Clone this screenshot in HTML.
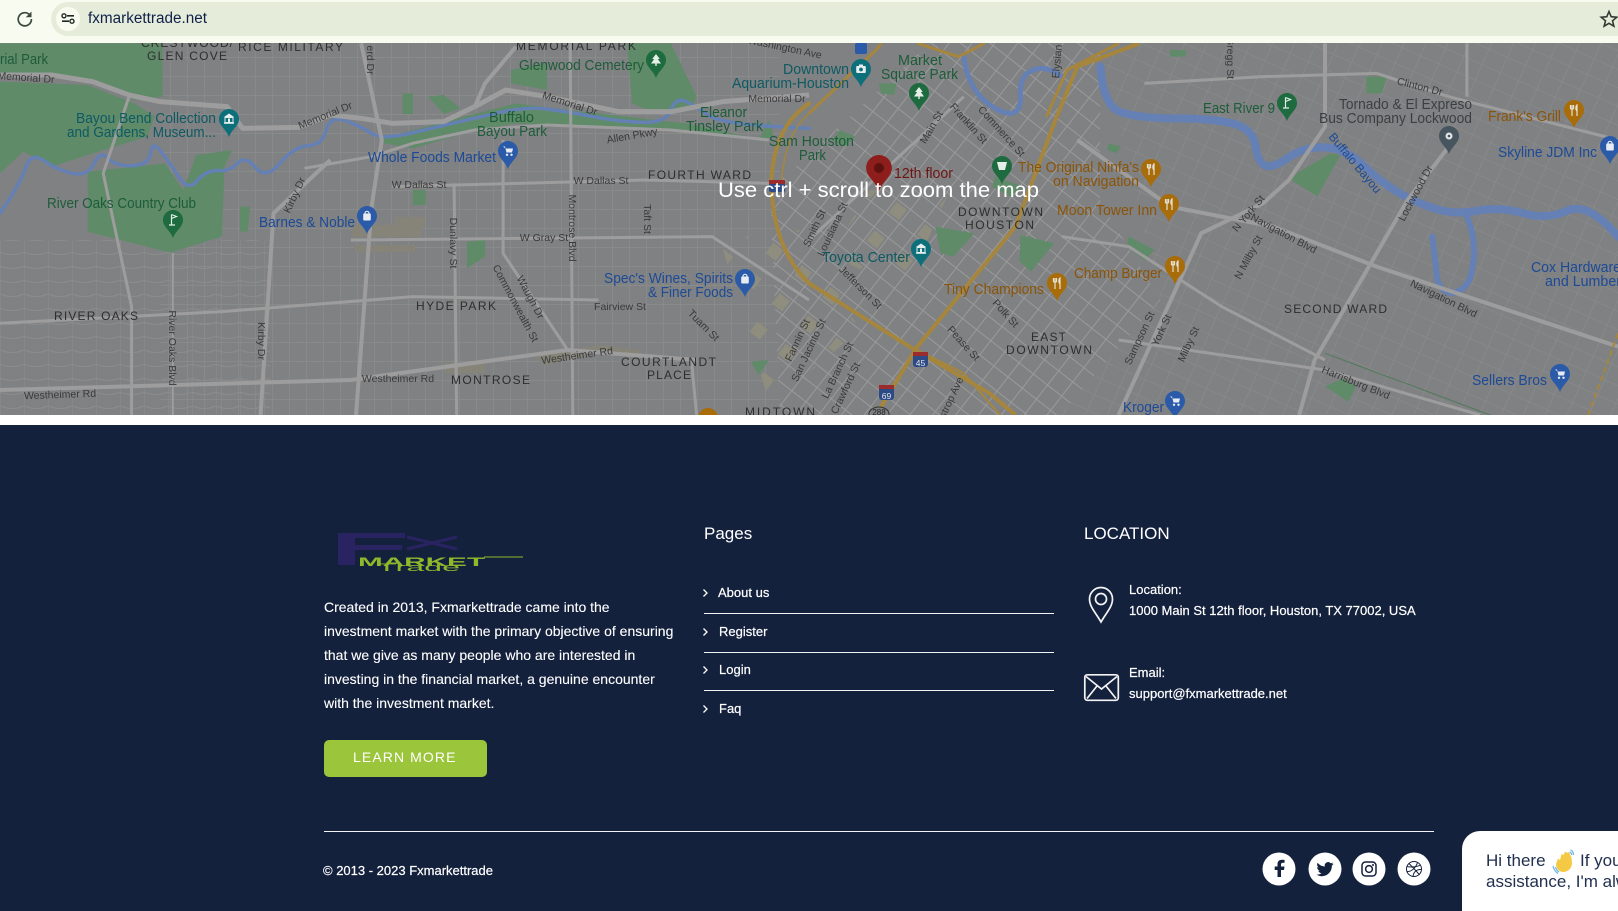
<!DOCTYPE html>
<html><head><meta charset="utf-8"><title>fxmarkettrade.net</title>
<style>
html,body{margin:0;padding:0;width:1618px;height:891px;overflow:hidden;background:#14213d;font-family:"Liberation Sans",sans-serif}
.a{position:absolute;white-space:nowrap}
#foot{position:absolute;left:0;top:425px;width:1618px;height:466px;background:#14213d}
.w{color:#fff;font-size:13px;-webkit-text-stroke:.2px #fff}
.p{color:#fff;font-size:14px;left:324px;-webkit-text-stroke:.1px #fff}
.hr{position:absolute;height:1px;background:#f4f4f4}
svg text{font-family:"Liberation Sans",sans-serif}
.g{fill:#1d5c39;font-size:15px}.b{fill:#1c4a96;font-size:15px}.t{fill:#0d5a63;font-size:15px}.o{fill:#8b5406;font-size:15px}
.k{fill:#3b3f42;font-size:15px}.d{fill:#2e2e2e;font-size:12px}.s{fill:#3a3a3a;font-size:10.5px;text-anchor:middle}
.r path,.r polyline,.r polygon{vector-effect:non-scaling-stroke}
</style></head><body>
<!-- toolbar -->
<div class="a" style="left:0;top:0;width:1618px;height:43px;background:#f7fbf0"></div>
<div class="a" style="left:51px;top:2px;width:1567px;height:34px;background:#e5edda;border-radius:17px 0 0 17px"></div>
<svg class="a" style="left:0;top:0" width="1618" height="43">
<path d="M30 15.200A6.600 6.600 0 1 0 31.400 19" fill="none" stroke="#3d4a3d" stroke-width="1.700"/>
<polygon points="31.500,11.500 31.500,17.200 25.800,17.200" fill="#3d4a3d"/>
<circle cx="68" cy="19" r="12" fill="#f7fbf0"/>
<circle cx="64" cy="15.800" r="2" fill="none" stroke="#1f2a24" stroke-width="1.400"/>
<path d="M67 15.800H74M62 21.200H69" stroke="#1f2a24" stroke-width="1.600"/>
<circle cx="72" cy="21.200" r="2" fill="none" stroke="#1f2a24" stroke-width="1.400"/>
<path d="M1609 11.500l2.200 5.200 5.600.5-4.300 3.600 1.400 5.400-4.900-2.900-4.900 2.900 1.400-5.400-4.300-3.600 5.600-.5z" fill="none" stroke="#333b33" stroke-width="1.600"/>
</svg>
<div class="a" style="left:88px;top:10px;font-size:15.300px;line-height:18px;color:#10204a">fxmarkettrade.net</div>

<!-- map -->
<svg class="a" style="left:0;top:43px" width="1618" height="372" viewBox="0 43 1618 372">
<defs>
<pattern id="p1" width="17" height="19" patternUnits="userSpaceOnUse"><path d="M0 0V19M0 0H17" stroke="#8e8e8f" stroke-width="1.200" fill="none"/></pattern>
<pattern id="p2" width="18" height="18" patternUnits="userSpaceOnUse" patternTransform="rotate(38)"><path d="M0 0V18M0 0H18" stroke="#9a9a9b" stroke-width="2" fill="none"/></pattern>
<pattern id="p3" width="20" height="17" patternUnits="userSpaceOnUse" patternTransform="rotate(24)"><path d="M0 0V17M0 0H20" stroke="#8d8d8e" stroke-width="1.100" fill="none"/></pattern>
<pattern id="p4" width="24" height="14" patternUnits="userSpaceOnUse"><path d="M0 0V14M0 0Q12 5 24 0" stroke="#8c8c8d" stroke-width="1.100" fill="none"/></pattern>
<pattern id="p5" width="36" height="36" patternUnits="userSpaceOnUse" patternTransform="rotate(38)"><rect x="3" y="3" width="13" height="13" fill="#8f8d7d"/></pattern>
<symbol id="pin" viewBox="0 0 20 28" overflow="visible"><path d="M10 0C4.500 0 0 4.500 0 10c0 7 7 10 10 18 3-8 10-11 10-18C20 4.500 15.500 0 10 0z"/></symbol>
<g id="fk" fill="none" stroke="#e4e2d8" stroke-width="1.200"><path d="M-3.500 -5V-1M-2 -5V6M-.5 -5V-1M-3.500 -1H-.5M3 6V-5C1.500 -4 1.500 0 3 1"/></g>
<g id="bag"><rect x="-3.800" y="-2.500" width="7.600" height="7" rx="1" fill="#e8ecf2"/><path d="M-2 -2.500A2 2.200 0 0 1 2 -2.500" fill="none" stroke="#e8ecf2" stroke-width="1.200"/></g>
<g id="cart" fill="#e8ecf2"><path d="M-5 -4.500H-3L-1.500 1.500H4L5 -2.500H-2.500z"/><circle cx="-1" cy="3.800" r="1.200"/><circle cx="3.500" cy="3.800" r="1.200"/></g>
<g id="cam"><rect x="-4.800" y="-3" width="9.600" height="7" rx="1" fill="#e6eeee"/><rect x="-2" y="-4.500" width="4" height="2" fill="#e6eeee"/><circle cy=".5" r="1.900" fill="#0d6f7a"/></g>
<g id="mus" fill="#e6eeee"><polygon points="0,-5.500 5,-2 -5,-2"/><rect x="-4" y="-1.500" width="8" height="5" fill="none" stroke="#e6eeee"/><rect x="-1" y="-.5" width="2" height="3.500"/><rect x="-5" y="3.500" width="10" height="1.300"/></g>
<g id="tree" fill="#e6eee8"><polygon points="0,-6 3.800,-1 1.800,-1 5,3.500 -5,3.500 -1.800,-1 -3.800,-1"/><rect x="-.7" y="3.500" width="1.400" height="2.500"/></g>
<g id="golf" fill="none" stroke="#e6eee8" stroke-width="1.200"><path d="M-1.500 -5.500V5M-1.500 -5.500L3.500 -3.500L-1.500 -1.500M-4 5H2"/></g>
</defs>
<rect x="0" y="43" width="1618" height="372" fill="#808183"/>
<!-- street grids -->
<rect x="160" y="43" width="620" height="372" fill="url(#p1)"/>
<rect x="0" y="240" width="270" height="175" fill="url(#p4)"/>
<polygon points="770,190 930,43 1100,43 1100,200 1160,300 1060,415 780,415" fill="url(#p2)"/>
<polygon points="1100,43 1618,43 1618,415 1060,415 1160,300" fill="url(#p3)"/>
<polygon points="720,240 800,230 860,330 770,405" fill="url(#p5)"/>
<polygon points="870,190 950,190 905,290 830,255" fill="url(#p5)"/>
<!-- beige tiles -->
<g fill="#868478">
<rect x="352" y="225" width="70" height="12"/><rect x="355" y="245" width="60" height="7"/><rect x="395" y="217" width="30" height="9"/>
<polygon points="535,355 600,345 640,350 640,356 600,352 545,365"/>
<rect x="445" y="363" width="40" height="10"/>
</g>
<!-- parks -->
<g class="r" transform="translate(0 40) scale(.516 .3333)" fill="#5f8b69">
<polygon points="0,10 315,10 315,170 260,180 180,125 0,100"/>
<polygon points="0,125 170,135 260,190 300,230 285,290 180,340 100,380 45,335 0,400"/>
<polygon points="170,395 320,370 355,450 380,345 450,330 435,380 430,590 330,638 170,575"/>
<polygon points="740,295 900,230 1000,190 1100,210 1330,250 1480,300 1340,270 1100,260 1000,250 900,280 800,325 745,310"/>
<polygon points="990,90 1060,70 1060,150 990,130"/>
<polygon points="1215,10 1300,10 1350,170 1340,210 1270,220 1225,190"/>
<polygon points="780,160 800,160 800,222 780,222"/><polygon points="830,170 860,165 892,205 860,222"/>
<polygon points="905,605 940,600 940,650 905,685"/><polygon points="465,500 485,500 480,575 465,575"/>
<polygon points="800,450 825,450 825,495 800,495"/><polygon points="1490,240 1470,300 1500,290"/>
<polygon points="1455,965 1490,960 1470,1005"/>
</g>
<g class="r" transform="translate(809 40) scale(.516 .3333)" fill="#5f8b69">
<polygon points="945,400 1010,340 1030,345 985,470 935,420"/>
<polygon points="410,585 475,610 430,695 408,665"/>
<polygon points="620,590 670,630 650,660 615,620"/>
<polygon points="245,560 320,580 280,650 255,640"/>
<polygon points="1080,110 1120,110 1110,160 1080,160"/>
<polygon points="1000,1040 1035,1015 1060,1040 1045,1085"/>
<polygon points="135,130 170,130 165,165 140,160"/>
<polygon points="360,410 415,440 390,470 355,440"/>
<polygon points="700,30 730,30 730,50 700,50"/>
<polygon points="580,310 605,320 595,340 578,330"/>
<polygon points="60,270 90,290 70,320 45,300"/>
</g>
<!-- water -->
<g class="r" transform="translate(0 40) scale(.516 .3333)" fill="none" stroke="#6580b4" stroke-linejoin="round" stroke-linecap="round">
<path stroke-width="3.500" d="M0,520 Q40,430 50,382 Q60,335 85,362 Q110,390 140,400 Q170,410 182,370 Q195,330 210,355 Q225,380 257,377 Q290,375 292,337 Q295,300 312,335 Q330,370 347,412 Q365,455 382,422 Q400,390 422,392 Q445,395 460,370 Q475,345 495,382 Q515,420 542,370 Q570,320 597,317 Q625,315 632,270 Q640,225 670,242 Q700,260 720,280 Q740,300 795,280 Q850,260 885,247 Q920,235 970,217 Q1020,200 1060,207 Q1100,215 1150,230 Q1200,245 1245,247 Q1290,250 1300,210 Q1310,170 1330,185 Q1350,200 1375,227 Q1400,255 1568,265"/>
</g>
<g class="r" transform="translate(809 40) scale(.516 .3333)" fill="none" stroke="#6580b4" stroke-linejoin="round" stroke-linecap="round">
<path stroke-width="5" d="M300,50 Q310,170 370,212 Q410,240 410,170 Q405,90 450,85 Q470,85 490,110"/>
<path stroke-width="8" d="M565,80 Q570,200 605,217 Q640,235 710,235 Q780,235 820,250 Q860,265 865,317 Q870,370 885,377 Q900,385 930,352 Q960,320 1000,322 Q1040,325 1075,377 Q1110,430 1145,460 Q1180,490 1215,507 Q1250,525 1295,512 Q1340,500 1385,520 Q1430,540 1470,512 Q1510,485 1568,590"/>
<path stroke-width="6" d="M1275,530 Q1300,620 1280,720 Q1260,770 1235,755 Q1215,740 1215,680 L1208,590"/>
</g>
<!-- major roads -->
<g class="r" transform="translate(0 40) scale(.516 .3333)" fill="none" stroke="#9d9d9e" stroke-linejoin="round">
<polyline stroke-width="5" points="0,105 100,105 180,125 250,165 310,185 440,200 470,265 580,262 640,225 700,235 760,250 860,245 920,200 980,150 1060,170 1200,215 1300,215 1400,185 1568,165"/>
<polyline stroke-width="4" points="700,10 740,300 720,500 690,1125"/>
<polyline stroke-width="4" points="640,360 530,520 505,1125"/>
<polyline stroke-width="3" points="590,385 720,350 800,310 920,270 1060,255 1300,270 1490,300"/>
<polyline stroke-width="3" points="1105,10 1110,1125"/>
<polyline stroke-width="3" points="880,430 885,1125"/>
<polyline stroke-width="3" points="975,300 975,640 1100,930"/>
<polyline stroke-width="3" points="760,440 1250,420 1490,430"/>
<polyline stroke-width="3" points="680,600 1380,590 1568,780"/>
<polyline stroke-width="4" points="0,1050 680,1020 1100,930 1350,960"/>
<polyline stroke-width="3" points="0,850 430,815 800,770 1160,780"/>
<polyline stroke-width="3" points="250,170 200,400 255,800 255,1125"/>
<polyline stroke-width="2" points="335,640 335,1125"/>
<polyline stroke-width="3" points="1340,960 1350,1125"/>
<polyline stroke-width="4" points="1000,20 940,130 920,200"/>
</g>
<g class="r" transform="translate(809 40) scale(.516 .3333)" fill="none" stroke="#9d9d9e" stroke-linejoin="round">
<polyline stroke-width="4" points="1000,10 1000,260 930,420 880,490 760,580 600,1125"/>
<polyline stroke-width="4" points="1240,320 1160,480 980,960 950,1125"/>
<polyline stroke-width="4" points="520,300 700,500 900,560 1100,680 1568,920"/>
<polyline stroke-width="3" points="650,130 880,110 1100,100 1240,170 1568,300"/>
<polyline stroke-width="3" points="600,900 1000,990 1300,1125"/>
<polyline stroke-width="3" points="1275,10 1275,170"/>
<polyline stroke-width="3" points="490,590 620,620 800,800 1000,960"/>
<polyline stroke-width="3" points="300,170 0,600"/>
</g>
<!-- freeways -->
<g class="r" transform="translate(0 40) scale(.516 .3333)" fill="none" stroke="#a5863c" stroke-linejoin="round" stroke-linecap="round">
<path stroke-width="4" d="M1568,190 Q1500,260 1495,420 Q1495,620 1568,730"/>
<path stroke-width="1.500" d="M1568,220 Q1522,280 1515,420"/>
</g>
<g class="r" transform="translate(809 40) scale(.516 .3333)" fill="none" stroke="#a5863c" stroke-linejoin="round">
<polyline stroke-width="4" points="0,730 200,925 350,1060 400,1125"/>
<polyline stroke-width="4" points="640,10 520,80 480,230 400,560 210,920 130,1125"/>
<polyline stroke-width="3" points="600,10 500,90 460,230"/>
<polyline stroke-width="3" points="0,220 130,30 140,10"/>
<polyline stroke-width="3" points="210,10 290,50 340,10"/>
<polyline stroke-width="2" points="170,900 300,1000 370,1125"/>
<polyline stroke-width="2" stroke-dasharray="6 3" points="1568,880 1510,1125"/>
<polyline stroke-width="1" stroke="#4f7a5c" points="1000,940 1320,1125"/>
</g>
<!-- pins -->
<use href="#pin" x="646" y="50" width="20" height="28" fill="#1d6b3f"/>
<use href="#pin" x="851" y="59" width="20" height="28" fill="#0d6f7a"/>
<use href="#pin" x="219" y="109" width="20" height="28" fill="#0d6f7a"/>
<use href="#pin" x="498" y="141" width="20" height="28" fill="#2b5ba8"/>
<use href="#pin" x="163" y="210" width="20" height="28" fill="#1d6b3f"/>
<use href="#pin" x="357" y="206" width="20" height="28" fill="#2b5ba8"/>
<use href="#pin" x="735" y="269" width="20" height="28" fill="#2b5ba8"/>
<use href="#pin" x="909" y="83" width="20" height="28" fill="#1d6b3f"/>
<use href="#pin" x="1277" y="93" width="20" height="28" fill="#1d6b3f"/>
<use href="#pin" x="1439" y="126" width="20" height="28" fill="#47555e"/>
<use href="#pin" x="1564" y="100" width="20" height="28" fill="#a86c08"/>
<use href="#pin" x="1600" y="136" width="20" height="28" fill="#2b5ba8"/>
<use href="#pin" x="992" y="156" width="20" height="28" fill="#1d6b3f"/>
<use href="#pin" x="1141" y="159" width="20" height="28" fill="#a86c08"/>
<use href="#pin" x="1159" y="194" width="20" height="28" fill="#a86c08"/>
<use href="#pin" x="911" y="239" width="20" height="28" fill="#0d6f7a"/>
<use href="#pin" x="1165" y="256" width="20" height="28" fill="#a86c08"/>
<use href="#pin" x="1047" y="273" width="20" height="28" fill="#a86c08"/>
<use href="#pin" x="1550" y="364" width="20" height="28" fill="#2b5ba8"/>
<use href="#pin" x="1165" y="391" width="20" height="28" fill="#2b5ba8"/>
<use href="#pin" x="698" y="408" width="20" height="28" fill="#a86c08"/>
<use href="#pin" x="866" y="155" width="26" height="36" fill="#8e1e1b"/>
<circle cx="879" cy="168" r="5" fill="#5e1210"/>
<!-- pin glyphs -->
<use href="#tree" x="656" y="60"/><use href="#tree" x="919" y="93"/>
<use href="#cam" x="861" y="69"/><use href="#mus" x="229" y="119"/><use href="#mus" x="921" y="249"/>
<use href="#cart" x="508" y="151"/><use href="#cart" x="1560" y="374"/><use href="#cart" x="1175" y="401"/>
<use href="#bag" x="367" y="216"/><use href="#bag" x="745" y="279"/><use href="#bag" x="1610" y="146"/>
<use href="#golf" x="173" y="220"/><use href="#golf" x="1287" y="103"/>
<use href="#fk" x="1574" y="110"/><use href="#fk" x="1151" y="169"/><use href="#fk" x="1169" y="204"/><use href="#fk" x="1175" y="266"/><use href="#fk" x="1057" y="283"/>
<circle cx="1449" cy="136" r="3.500" fill="#dfe3e6"/><circle cx="1449" cy="136" r="1.300" fill="#47555e"/>
<path d="M997 162h10l-2 8h-6z" fill="#e6eee8"/>
<!-- shields -->
<g>
<rect x="913" y="352" width="15" height="15" rx="3" fill="#2c4a86"/><rect x="913" y="352" width="15" height="4" fill="#9c2b2b"/><text x="920.500" y="366" font-size="8.500" fill="#e6e6e6" text-anchor="middle">45</text>
<rect x="879" y="385" width="15" height="15" rx="3" fill="#2c4a86"/><rect x="879" y="385" width="15" height="4" fill="#9c2b2b"/><text x="886.500" y="399" font-size="8.500" fill="#e6e6e6" text-anchor="middle">69</text>
<rect x="769" y="180" width="16" height="12" rx="2" fill="#2c4a86"/><rect x="769" y="180" width="16" height="4" fill="#9c2b2b"/>
<rect x="855" y="43" width="12" height="11" rx="2" fill="#2b5ba8"/>
<ellipse cx="879" cy="414" rx="10" ry="7" fill="#7f8082" stroke="#333"/><text x="879" y="415" font-size="8" fill="#222" text-anchor="middle">288</text>
</g>
<!-- labels -->
<g>
<text class="g" x="0" y="64" textLength="48" lengthAdjust="spacingAndGlyphs">rial Park</text>
<text class="d" x="141" y="47" textLength="92">CRESTWOOD/</text>
<text class="d" x="147" y="60" textLength="80">GLEN COVE</text>
<text class="d" x="238" y="51" textLength="105">RICE MILITARY</text>
<text class="d" x="516" y="50" textLength="120">MEMORIAL PARK</text>
<text class="g" x="519" y="70" textLength="125" lengthAdjust="spacingAndGlyphs">Glenwood Cemetery</text>
<text class="s" transform="rotate(12 785 47)" x="785" y="51">Washington Ave</text>
<text class="t" x="783" y="74" textLength="66" lengthAdjust="spacingAndGlyphs">Downtown</text>
<text class="t" x="732" y="88" textLength="117" lengthAdjust="spacingAndGlyphs">Aquarium-Houston</text>
<text class="s" x="777" y="102">Memorial Dr</text>
<text class="s" transform="rotate(4 26 77)" x="26" y="81">Memorial Dr</text>
<text class="t" x="76" y="123" textLength="140" lengthAdjust="spacingAndGlyphs">Bayou Bend Collection</text>
<text class="t" x="67" y="137" textLength="149" lengthAdjust="spacingAndGlyphs">and Gardens, Museum...</text>
<text class="s" transform="rotate(-22 325 115)" x="325" y="119">Memorial Dr</text>
<text class="s" transform="rotate(18 570 103)" x="570" y="107">Memorial Dr</text>
<text class="g" x="489" y="122" textLength="45" lengthAdjust="spacingAndGlyphs">Buffalo</text>
<text class="g" x="477" y="136" textLength="70" lengthAdjust="spacingAndGlyphs">Bayou Park</text>
<text class="g" x="700" y="117" textLength="47" lengthAdjust="spacingAndGlyphs">Eleanor</text>
<text class="g" x="686" y="131" textLength="77" lengthAdjust="spacingAndGlyphs">Tinsley Park</text>
<text class="s" transform="rotate(-10 632 135)" x="632" y="139">Allen Pkwy</text>
<text class="b" x="368" y="162" textLength="128" lengthAdjust="spacingAndGlyphs">Whole Foods Market</text>
<text class="d" x="648" y="179" textLength="103">FOURTH WARD</text>
<text class="s" x="419" y="188">W Dallas St</text>
<text class="s" x="601" y="184">W Dallas St</text>
<text class="g" x="769" y="146" textLength="85" lengthAdjust="spacingAndGlyphs">Sam Houston</text>
<text class="g" x="799" y="160" textLength="27" lengthAdjust="spacingAndGlyphs">Park</text>
<text class="g" x="47" y="208" textLength="149" lengthAdjust="spacingAndGlyphs">River Oaks Country Club</text>
<text class="s" transform="rotate(-65 294 195)" x="294" y="199">Kirby Dr</text>
<text class="b" x="259" y="227" textLength="96" lengthAdjust="spacingAndGlyphs">Barnes &amp; Noble</text>
<text class="s" transform="rotate(90 454 243)" x="454" y="247">Dunlavy St</text>
<text class="s" transform="rotate(90 573 228)" x="573" y="232">Montrose Blvd</text>
<text class="s" transform="rotate(90 648 219)" x="648" y="223">Taft St</text>
<text class="s" x="544" y="241">W Gray St</text>
<text class="s" transform="rotate(90 371 60)" x="371" y="64">erd Dr</text>
<text class="b" x="604" y="283" textLength="129" lengthAdjust="spacingAndGlyphs">Spec's Wines, Spirits</text>
<text class="b" x="648" y="297" textLength="85" lengthAdjust="spacingAndGlyphs">&amp; Finer Foods</text>
<text class="s" transform="rotate(62 516 303)" x="516" y="307">Commonwealth St</text>
<text class="s" transform="rotate(62 531 297)" x="531" y="301">Waugh Dr</text>
<text class="s" x="620" y="310">Fairview St</text>
<text class="s" transform="rotate(45 704 325)" x="704" y="329">Tuam St</text>
<text class="d" x="54" y="320" textLength="84">RIVER OAKS</text>
<text class="s" transform="rotate(90 173 348)" x="173" y="352">River Oaks Blvd</text>
<text class="s" transform="rotate(90 262 341)" x="262" y="345">Kirby Dr</text>
<text class="d" x="416" y="310" textLength="80">HYDE PARK</text>
<text class="s" transform="rotate(-8 577 355)" x="577" y="359">Westheimer Rd</text>
<text class="d" x="621" y="366" textLength="95">COURTLANDT</text>
<text class="d" x="647" y="379" textLength="44">PLACE</text>
<text class="s" x="398" y="382">Westheimer Rd</text>
<text class="d" x="451" y="384" textLength="79">MONTROSE</text>
<text class="s" transform="rotate(-2 60 394)" x="60" y="398">Westheimer Rd</text>
<text class="d" x="745" y="416" textLength="70">MIDTOWN</text>
<text class="g" x="898" y="65" textLength="44" lengthAdjust="spacingAndGlyphs">Market</text>
<text class="g" x="881" y="79" textLength="77" lengthAdjust="spacingAndGlyphs">Square Park</text>
<text class="s" transform="rotate(-85 1057 55)" x="1057" y="59">Elysian St</text>
<text class="s" transform="rotate(90 1231 58)" x="1231" y="62">Gregg St</text>
<text class="s" transform="rotate(-60 931 127)" x="931" y="131">Main St</text>
<text class="s" transform="rotate(48 969 123)" x="969" y="127">Franklin St</text>
<text class="s" transform="rotate(48 1002 131)" x="1002" y="135">Commerce St</text>
<text class="s" transform="rotate(14 1420 86)" x="1420" y="90">Clinton Dr</text>
<text class="g" x="1203" y="113" textLength="72" lengthAdjust="spacingAndGlyphs">East River 9</text>
<text class="k" x="1339" y="109" textLength="133" lengthAdjust="spacingAndGlyphs">Tornado &amp; El Expreso</text>
<text class="k" x="1319" y="123" textLength="153" lengthAdjust="spacingAndGlyphs">Bus Company Lockwood</text>
<text class="o" x="1488" y="121" textLength="73" lengthAdjust="spacingAndGlyphs">Frank's Grill</text>
<text class="b" x="1498" y="157" textLength="99" lengthAdjust="spacingAndGlyphs">Skyline JDM Inc</text>
<text transform="rotate(50 1355 163)" x="1355" y="167" text-anchor="middle" font-size="12" fill="#1c4a96">Buffalo Bayou</text>
<text x="894" y="178" textLength="59" lengthAdjust="spacingAndGlyphs" font-size="15" fill="#6e1512">12th floor</text>
<text class="o" x="1018" y="172" textLength="121" lengthAdjust="spacingAndGlyphs">The Original Ninfa's</text>
<text class="o" x="1053" y="186" textLength="86" lengthAdjust="spacingAndGlyphs">on Navigation</text>
<text class="o" x="1057" y="215" textLength="100" lengthAdjust="spacingAndGlyphs">Moon Tower Inn</text>
<text class="d" x="958" y="216" textLength="85">DOWNTOWN</text>
<text class="d" x="965" y="229" textLength="69">HOUSTON</text>
<text class="s" transform="rotate(-65 814 228)" x="814" y="232">Smith St</text>
<text class="s" transform="rotate(-65 832 229)" x="832" y="233">Louisiana St</text>
<text class="t" x="822" y="262" textLength="88" lengthAdjust="spacingAndGlyphs">Toyota Center</text>
<text class="s" transform="rotate(-50 1248 213)" x="1248" y="217">N York St</text>
<text class="s" transform="rotate(28 1284 233)" x="1284" y="237">Navigation Blvd</text>
<text class="s" transform="rotate(-62 1248 257)" x="1248" y="261">N Milby St</text>
<text class="s" transform="rotate(-62 1415 193)" x="1415" y="197">Lockwood Dr</text>
<text class="s" transform="rotate(45 861 287)" x="861" y="291">Jefferson St</text>
<text class="o" x="1074" y="278" textLength="88" lengthAdjust="spacingAndGlyphs">Champ Burger</text>
<text class="o" x="944" y="294" textLength="100" lengthAdjust="spacingAndGlyphs">Tiny Champions</text>
<text class="b" x="1531" y="272" textLength="90" lengthAdjust="spacingAndGlyphs">Cox Hardware</text>
<text class="b" x="1545" y="286" textLength="76" lengthAdjust="spacingAndGlyphs">and Lumber</text>
<text class="d" x="1284" y="313" textLength="103">SECOND WARD</text>
<text class="s" transform="rotate(26 1444 298)" x="1444" y="302">Navigation Blvd</text>
<text class="s" transform="rotate(48 1006 313)" x="1006" y="317">Polk St</text>
<text class="s" transform="rotate(48 964 343)" x="964" y="347">Pease St</text>
<text class="d" x="1031" y="341" textLength="35">EAST</text>
<text class="d" x="1006" y="354" textLength="86">DOWNTOWN</text>
<text class="s" transform="rotate(-65 1139 338)" x="1139" y="342">Sampson St</text>
<text class="s" transform="rotate(-65 1161 330)" x="1161" y="334">York St</text>
<text class="s" transform="rotate(-65 1188 344)" x="1188" y="348">Milby St</text>
<text class="s" transform="rotate(22 1356 382)" x="1356" y="386">Harrisburg Blvd</text>
<text class="b" x="1472" y="385" textLength="75" lengthAdjust="spacingAndGlyphs">Sellers Bros</text>
<text class="b" x="1123" y="412" textLength="41" lengthAdjust="spacingAndGlyphs">Kroger</text>
<text class="s" transform="rotate(-65 797 340)" x="797" y="344">Fannin St</text>
<text class="s" transform="rotate(-65 808 350)" x="808" y="354">San Jacinto St</text>
<text class="s" transform="rotate(-65 837 370)" x="837" y="374">La Branch St</text>
<text class="s" transform="rotate(-65 845 388)" x="845" y="392">Crawford St</text>
<text class="s" transform="rotate(-65 948 403)" x="948" y="407">Bastrop Ave</text>
<text x="718" y="197" textLength="321" lengthAdjust="spacingAndGlyphs" font-size="21" fill="#fff">Use ctrl + scroll to zoom the map</text>
</g>
</svg>
<div class="a" style="left:0;top:415px;width:1618px;height:10px;background:#fff"></div>

<!-- footer -->
<div id="foot"></div>
<svg class="a" style="left:330px;top:525px" width="200" height="50">
<path d="M8 8H75V13H25V20H72V25H25V40H8z" fill="#2a2362"/>
<path d="M77 12L127 24M127 12L77 24" stroke="#2a2362" stroke-width="3"/>
<text x="28" y="41" font-size="12" font-weight="bold" fill="#8fb82a" textLength="127" lengthAdjust="spacingAndGlyphs">MARKET</text>
<path d="M154 32H193" stroke="#8fb82a" stroke-width="1"/>
<text x="47" y="46" font-size="11" fill="#8fb82a" textLength="83" lengthAdjust="spacingAndGlyphs">Trade</text>
</svg>
<div class="a p" style="top:599px;line-height:16px">Created in 2013, Fxmarkettrade came into the</div>
<div class="a p" style="top:623px;line-height:16px">investment market with the primary objective of ensuring</div>
<div class="a p" style="top:647px;line-height:16px">that we give as many people who are interested in</div>
<div class="a p" style="top:671px;line-height:16px">investing in the financial market, a genuine encounter</div>
<div class="a p" style="top:695px;line-height:16px">with the investment market.</div>
<div class="a" style="left:324px;top:740px;width:163px;height:37px;background:#9bc53a;border-radius:5px"></div>
<div class="a" style="left:353px;top:749px;line-height:16px;font-size:14px;letter-spacing:1.100px;color:#fff">LEARN MORE</div>

<div class="a" style="left:704px;top:524px;font-size:17px;line-height:20px;color:#fff">Pages</div>
<div class="a" style="left:1084px;top:524px;font-size:17px;line-height:20px;color:#fff">LOCATION</div>
<svg class="a" style="left:700px;top:585px" width="12" height="135" fill="none" stroke="#fff" stroke-width="1.300">
<path d="M3.500 4.500L7 8L3.500 11.500M3.500 43.500L7 47L3.500 50.500M3.500 81.500L7 85L3.500 88.500M3.500 120.500L7 124L3.500 127.500"/>
</svg>
<div class="a w" style="left:718px;top:585px;line-height:16px">About us</div>
<div class="a w" style="left:719px;top:624px;line-height:16px">Register</div>
<div class="a w" style="left:719px;top:662px;line-height:16px">Login</div>
<div class="a w" style="left:719px;top:701px;line-height:16px">Faq</div>
<div class="hr" style="left:704px;top:613px;width:350px"></div>
<div class="hr" style="left:704px;top:652px;width:350px"></div>
<div class="hr" style="left:704px;top:690px;width:350px"></div>

<svg class="a" style="left:1080px;top:580px" width="44" height="125" fill="none" stroke="#f4f4f4" stroke-width="1.700">
<path d="M21 42C16 33 9.500 27 9.500 19A11.500 11.500 0 0 1 32.500 19C32.500 27 26 33 21 42z"/>
<circle cx="21" cy="19" r="5.500"/>
<rect x="4.800" y="94.800" width="33.500" height="25.500" rx="2.500"/>
<path d="M6 96.500L21.500 109L37 96.500M7 118.500L17 106M36 118.500L26 106"/>
</svg>
<div class="a w" style="left:1129px;top:582px;line-height:16px">Location:</div>
<div class="a w" style="left:1129px;top:603px;line-height:16px">1000 Main St 12th floor, Houston, TX 77002, USA</div>
<div class="a w" style="left:1129px;top:665px;line-height:16px">Email:</div>
<div class="a w" style="left:1129px;top:686px;line-height:16px">support@fxmarkettrade.net</div>

<div class="hr" style="left:324px;top:831px;width:1110px"></div>
<div class="a w" style="left:323px;top:863px;line-height:16px">© 2013 - 2023 Fxmarkettrade</div>

<svg class="a" style="left:1260px;top:850px" width="175" height="41">
<g fill="#fff"><circle cx="19" cy="19" r="16.500"/><circle cx="65" cy="19" r="16.500"/><circle cx="109" cy="19" r="16.500"/><circle cx="154" cy="19" r="16.500"/></g>
<path d="M21 27V20H24L24.500 16.500H21V14.500C21 13.300 21.500 12.700 23 12.700H24.600V10C24 9.900 23 9.800 22 9.800C19.300 9.800 17.500 11.400 17.500 14.200V16.500H14.700V20H17.500V27z" fill="#14213d"/>
<path d="M73.500 13.800c-.7.300-1.300.5-2 .6.700-.4 1.300-1.100 1.500-1.900-.7.400-1.400.7-2.200.8a3.500 3.500 0 0 0-6 3.200c-2.900-.1-5.500-1.500-7.200-3.700-.9 1.600-.5 3.700 1.100 4.700-.6 0-1.100-.2-1.600-.4 0 1.700 1.200 3.200 2.800 3.500-.5.100-1.100.2-1.600.1.500 1.400 1.800 2.400 3.300 2.400-1.500 1.200-3.400 1.700-5.200 1.500 1.600 1 3.400 1.600 5.400 1.600 6.500 0 10.300-5.500 10-10.400.8-.5 1.300-1.200 1.700-2z" fill="#14213d"/>
<g fill="none" stroke="#14213d" stroke-width="1.500"><rect x="102" y="12" width="14" height="14" rx="3.500"/><circle cx="109" cy="19" r="3.400"/></g><circle cx="113" cy="15" r="1" fill="#14213d"/>
<g fill="none" stroke="#14213d" stroke-width="1"><circle cx="154" cy="19" r="7.500"/><path d="M149 13.500C153 17.500 158 23 159.500 25M157.500 12.500C156 17.500 151.500 22 146.700 21.500M147 16.500C151 17.500 157 17 160.500 15M153 26.500C153.500 22 156.500 19 161.500 19.500"/></g>
</svg>

<div class="a" style="left:1462px;top:831px;width:170px;height:80px;background:#fff;border-radius:18px 0 0 0"></div>
<div class="a" style="left:1486px;top:851px;font-size:17px;line-height:20px;color:#22304f">Hi there</div>
<svg class="a" style="left:1552px;top:849px" width="22" height="26">
<path d="M4 15L6 9.500L8 11L9.500 5L11.500 6L13 2.800L15 3.800L16.500 3L18 5L19.500 9L20 14C20 20 15 23.500 10.500 23C6.500 22.500 4 19 4 15z" fill="#f6c945"/>
<path d="M1 17Q2 22 6 24.500M3.500 18Q4 21 7 23M18.500 1Q21.500 2 21.500 6M17.500 3Q19.500 3.500 19.800 6" fill="none" stroke="#6bb5e8" stroke-width="1.200"/>
</svg>
<div class="a" style="left:1580px;top:851px;font-size:17px;line-height:20px;color:#22304f">If you</div>
<div class="a" style="left:1486px;top:872px;font-size:17px;line-height:20px;color:#22304f">assistance, I'm always</div>
</body></html>
